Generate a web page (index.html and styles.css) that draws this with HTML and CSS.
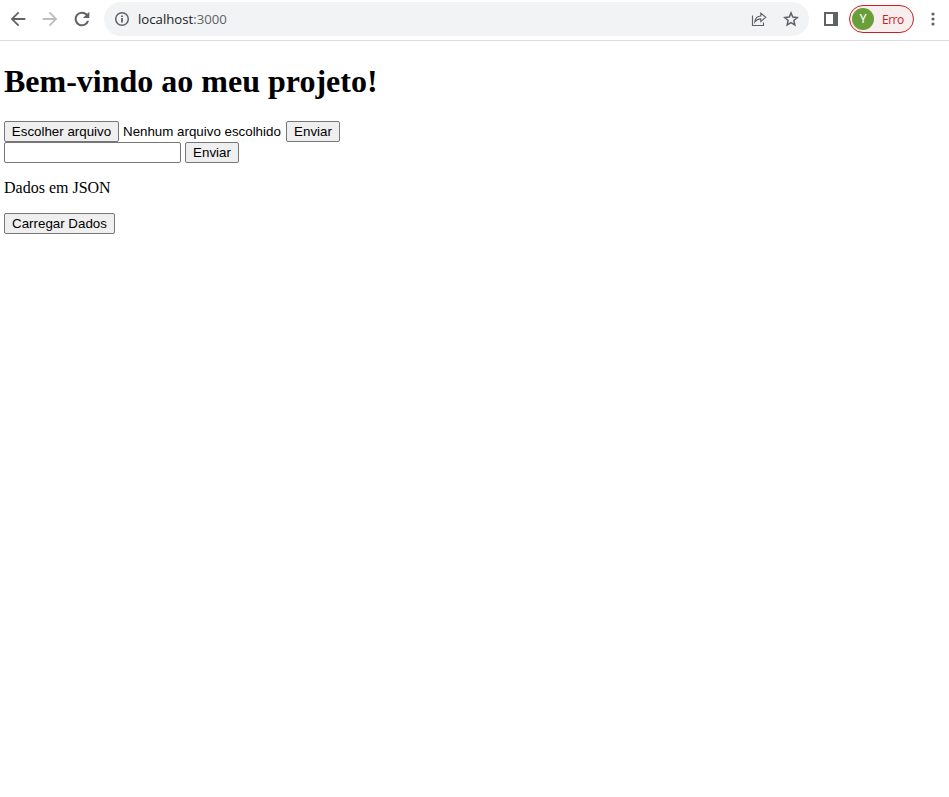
FILE: index.html
```html
<!DOCTYPE html>
<html lang="pt-BR">
<head>
<meta charset="utf-8">
<title>localhost:3000</title>
<link rel="stylesheet" href="styles.css">
</head>
<body>
<header class="toolbar">
  <nav class="nav">
    <svg class="nav-icon" viewBox="0 0 24 24"><path d="M20 10.8H7.83l5.59-5.39L12 4l-8 8 8 8 1.41-1.41L7.83 13.2H20z"/></svg>
    <svg class="nav-icon disabled" viewBox="0 0 24 24"><path d="M4 10.8h12.17l-5.59-5.39L12 4l8 8-8 8-1.41-1.41 5.58-5.39H4z"/></svg>
    <svg class="nav-icon" viewBox="0 0 24 24"><path d="M17.65 6.35A8 8 0 1 0 19.73 14h-2.3A5.8 5.8 0 1 1 16.1 7.9L13 11h7V4z"/></svg>
  </nav>
  <div class="address">
    <svg class="info" viewBox="0 0 16 16"><circle cx="8" cy="8" r="6.3" fill="none" stroke="#5f6368" stroke-width="1.5"/><path d="M7.1 7h1.8v4.5H7.1zM7.1 4.4h1.8v1.7H7.1z"/></svg>
    <span class="url">localhost<span class="port">:3000</span></span>
    <svg class="share" viewBox="0 0 16 16"><path d="M1.5 4.5v10h11v-3M3.8 11c.3-4 2.7-5.9 6-6V2.2L14.8 6.3l-5 4.3V7.8C7.2 7.8 5.4 8.8 3.8 11z" fill="none" stroke="#5f6368" stroke-width="1.15"/></svg>
    <svg class="star" viewBox="0 0 16 16"><path d="M8 1.9 9.75 6.1l4.5.4-3.4 3 1 4.4L8 11.6l-3.85 2.3 1-4.4-3.4-3 4.5-.4z" fill="none" stroke="#5f6368" stroke-width="1.5"/></svg>
  </div>
  <svg class="panel" viewBox="0 0 14 14"><path fill-rule="evenodd" d="M0 0h14v14H0zM2 2v10h7V2z"/></svg>
  <div class="profile"><span class="avatar">Y</span><span class="error">Erro</span></div>
  <svg class="more" viewBox="0 0 4 14"><circle cx="2" cy="2" r="1.6"/><circle cx="2" cy="7" r="1.6"/><circle cx="2" cy="12" r="1.6"/></svg>
</header>
<main class="page">
  <h1>Bem-vindo ao meu projeto!</h1>
  <form class="row upload">
    <button type="button" class="choose">Escolher arquivo</button>
    <span class="filename">Nenhum arquivo escolhido</span>
    <button type="button" class="send">Enviar</button>
  </form>
  <form class="row">
    <input type="text" class="field">
    <button type="button" class="send">Enviar</button>
  </form>
  <p>Dados em JSON</p>
  <button type="button" class="load">Carregar Dados</button>
</main>
</body>
</html>
```
FILE: styles.css
```css
* { box-sizing: border-box; }
body { margin: 0; background: #fff; color: #000; font: 16px "Liberation Serif", serif; }
svg { display: block; flex: none; fill: #5f6368; }
.toolbar { display: flex; align-items: center; height: 41px; padding-bottom: 2px; border-bottom: 1px solid #dadce0; }
.nav { display: flex; gap: 10px; width: 104px; padding-left: 7px; flex: none; }
.nav-icon { width: 22px; height: 22px; }
.disabled { fill: #bbbdbf; }
.address { display: flex; align-items: center; width: 705px; height: 34px; padding: 0 10px; border-radius: 17px; background: #f1f3f4; }
.info { width: 16px; height: 16px; }
.url { margin: 0 auto 0 8px; color: #202124; font: 13.2px "Open Sans", sans-serif; white-space: nowrap; }
.port { color: #5f6368; }
.share { width: 16px; height: 16px; margin-right: 16px; }
.star { width: 16px; height: 16px; }
.panel { width: 14px; height: 14px; margin-left: 15px; }
.profile { display: flex; align-items: center; width: 65px; height: 28px; margin-left: 11px; padding-left: 2px; border: 1px solid #c5221f; border-radius: 14px; background: #f9eeee; }
.avatar { width: 22px; height: 22px; border-radius: 50%; background: #689f38; color: #fff; font: 12px/22px Roboto, sans-serif; text-align: center; }
.error { margin-left: 8px; color: #c5221f; font: 12px "Open Sans", sans-serif; letter-spacing: -0.5px; }
.more { width: 4px; height: 14px; margin-left: 16.5px; }
.page { padding: 22px 4px 0; }
h1 { margin: 0; font-size: 32px; line-height: 37px; }
.row { display: flex; height: 21px; align-items: center; }
.upload { margin-top: 21px; }
button, .filename { font: 13.333px "Liberation Sans", sans-serif; color: #000; white-space: nowrap; }
button { height: 21px; padding: 0; border: 1px solid #767676; border-radius: 2px; background: #efefef; text-align: center; }
.choose { width: 115px; }
.filename { width: 163px; margin-left: 4px; }
.send { width: 54px; }
.field { width: 177px; height: 21px; margin: 0 4px 0 0; padding: 1px 2px; border: 1px solid #767676; border-radius: 2px; background: #fff; }
p { margin: 16px 0; line-height: 18px; }
.load { display: block; width: 111px; }
```
